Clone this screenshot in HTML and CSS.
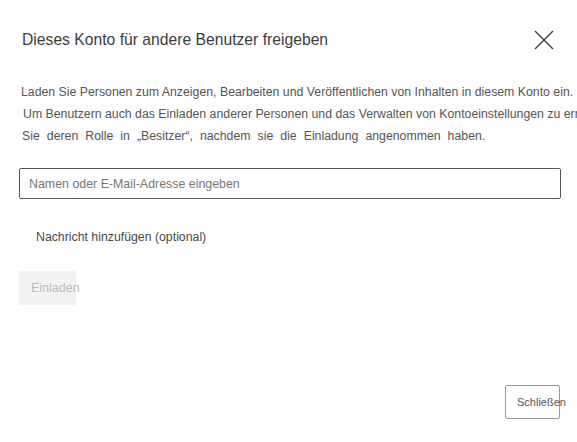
FILE: index.html
```html
<!DOCTYPE html>
<html lang="de">
<head>
<meta charset="utf-8">
<link rel="stylesheet" href="styles.css">
</head>
<body>
<div class="dialog">
  <div class="header">
    <h1 class="title">Dieses Konto für andere Benutzer freigeben</h1>
    <button class="close" aria-label="Schließen">
      <svg width="20" height="20" viewBox="0 0 20 20"><path d="M1 1L19 19M19 1L1 19" stroke="#444" stroke-width="1.5" fill="none"/></svg>
    </button>
  </div>
  <p class="desc">
    <span class="line l1">Laden Sie Personen zum Anzeigen, Bearbeiten und Veröffentlichen von Inhalten in diesem Konto ein.</span>
    <span class="line l2">Um Benutzern auch das Einladen anderer Personen und das Verwalten von Kontoeinstellungen zu ermöglichen, ändern</span>
    <span class="line l3">Sie deren Rolle in „Besitzer“, nachdem sie die Einladung angenommen haben.</span>
  </p>
  <div class="field">
    <input class="input" type="text" placeholder="Namen oder E-Mail-Adresse eingeben">
  </div>
  <div class="message">Nachricht hinzufügen (optional)</div>
  <button class="invite">Einladen</button>
  <div class="footer">
    <button class="dismiss">Schließen</button>
  </div>
</div>
</body>
</html>
```
FILE: styles.css
```css
html, body {
  margin: 0;
  padding: 0;
  background: #fff;
  overflow: hidden;
}
body {
  font-family: "Liberation Sans", Arial, sans-serif;
  color: #333;
  width: 577px;
  height: 442px;
}
.dialog {
  padding: 0 17px 0 19px;
  display: flex;
  flex-direction: column;
}
.header {
  display: flex;
  justify-content: space-between;
  align-items: center;
  padding-top: 30px;
  height: 20px;
}
.title {
  margin: 0 0 0 3px;
  font-size: 15.7px;
  font-weight: normal;
  color: #3c3c3c;
  line-height: 20px;
}
.close {
  border: 0;
  background: none;
  padding: 0;
  margin-right: 6px;
  width: 20px;
  height: 20px;
  display: flex;
}
.desc {
  margin: 31px 0 0 2px;
  font-size: 12.3px;
  line-height: 22px;
  color: #555;
  white-space: nowrap;
}
.line { display: block; }
.l2 { padding-left: 2px; }
.l3 { padding-left: 1px; word-spacing: 3.6px; }
.field {
  margin-top: 21px;
}
.input {
  box-sizing: border-box;
  width: 542px;
  height: 31px;
  border: 1px solid #555;
  border-radius: 2px;
  padding: 0 9px;
  font-family: "Liberation Sans", Arial, sans-serif;
  font-size: 12.4px;
  color: #333;
  outline: none;
}
.input::placeholder { color: #777; }
.message {
  margin: 31px 0 0 17px;
  font-size: 12.3px;
  color: #4a4a4a;
  line-height: 14px;
}
.invite {
  margin-top: 27px;
  align-self: flex-start;
  box-sizing: border-box;
  width: 57px;
  height: 34px;
  border: 0;
  background: #f3f3f3;
  color: #bbb;
  font-family: "Liberation Sans", Arial, sans-serif;
  font-size: 12.5px;
  padding: 0 0 0 12px;
  text-align: left;
  white-space: nowrap;
  overflow: visible;
}
.footer {
  display: flex;
  justify-content: flex-end;
  margin-top: 80px;
}
.dismiss {
  box-sizing: border-box;
  width: 55px;
  height: 34px;
  border: 1px solid #999;
  border-radius: 2px;
  background: #fff;
  color: #555;
  font-family: "Liberation Sans", Arial, sans-serif;
  font-size: 11px;
  padding: 0 0 0 11px;
  text-align: left;
  white-space: nowrap;
  overflow: visible;
}
```
